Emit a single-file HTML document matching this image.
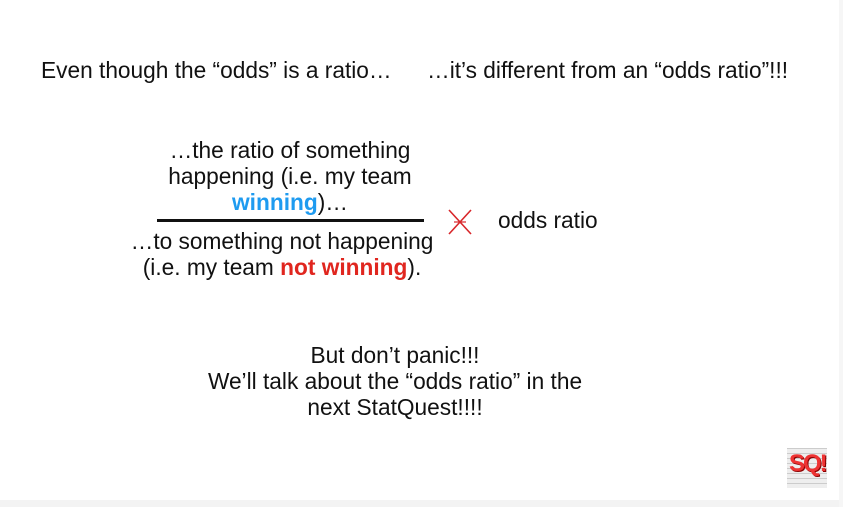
<!DOCTYPE html>
<html><head><meta charset="utf-8"><style>
body{margin:0;width:843px;height:507px;background:#fff;position:relative;overflow:hidden;font-family:"Liberation Sans",Arial,sans-serif;color:#111;font-size:22.7px}
.t{position:absolute;white-space:nowrap;line-height:26px}
.c{text-align:center;transform:translateX(-50%)}
b.bl{color:#1e9bf0}b.rd{color:#e0261f}
</style></head><body>
<div class="t" style="left:41px;top:57px">Even though the “odds” is a ratio…</div>
<div class="t" style="left:427px;top:57px">…it’s different from an “odds ratio”!!!</div>
<div class="t c" style="left:290px;top:137px">…the ratio of something<br>happening (i.e. my team<br><b class="bl">winning</b>)…</div>
<div style="position:absolute;left:157px;top:219px;width:267px;height:3px;background:#111"></div>
<div class="t c" style="left:282px;top:228px">…to something not happening<br>(i.e. my team <b class="rd">not winning</b>).</div>
<svg style="position:absolute;left:446px;top:208px" width="28" height="28"><path d="M3 2L25 26M25 2L3 26" stroke="#d8262a" stroke-width="1.6"/><path d="M8 14H20" stroke="#d8262a" stroke-width="1.2"/></svg>
<div class="t" style="left:498px;top:207px">odds ratio</div>
<div class="t c" style="left:395px;top:342px">But don’t panic!!!<br>We’ll talk about the “odds ratio” in the<br>next StatQuest!!!!</div>
<div style="position:absolute;left:787px;top:448px;width:40px;height:40px;background:repeating-linear-gradient(0deg,#eee 0 4px,#ccc 4px 5px),#eee;"></div>
<div style="position:absolute;left:789px;top:450px;font:bold 24px 'Liberation Sans',sans-serif;color:#e33;letter-spacing:-2px;text-shadow:1px 1px 0 #800">SQ!</div>
<div style="position:absolute;left:0;top:500px;width:843px;height:7px;background:#f3f3f3"></div>
<div style="position:absolute;left:839px;top:0;width:4px;height:507px;background:#f6f6f6"></div>
</body></html>
